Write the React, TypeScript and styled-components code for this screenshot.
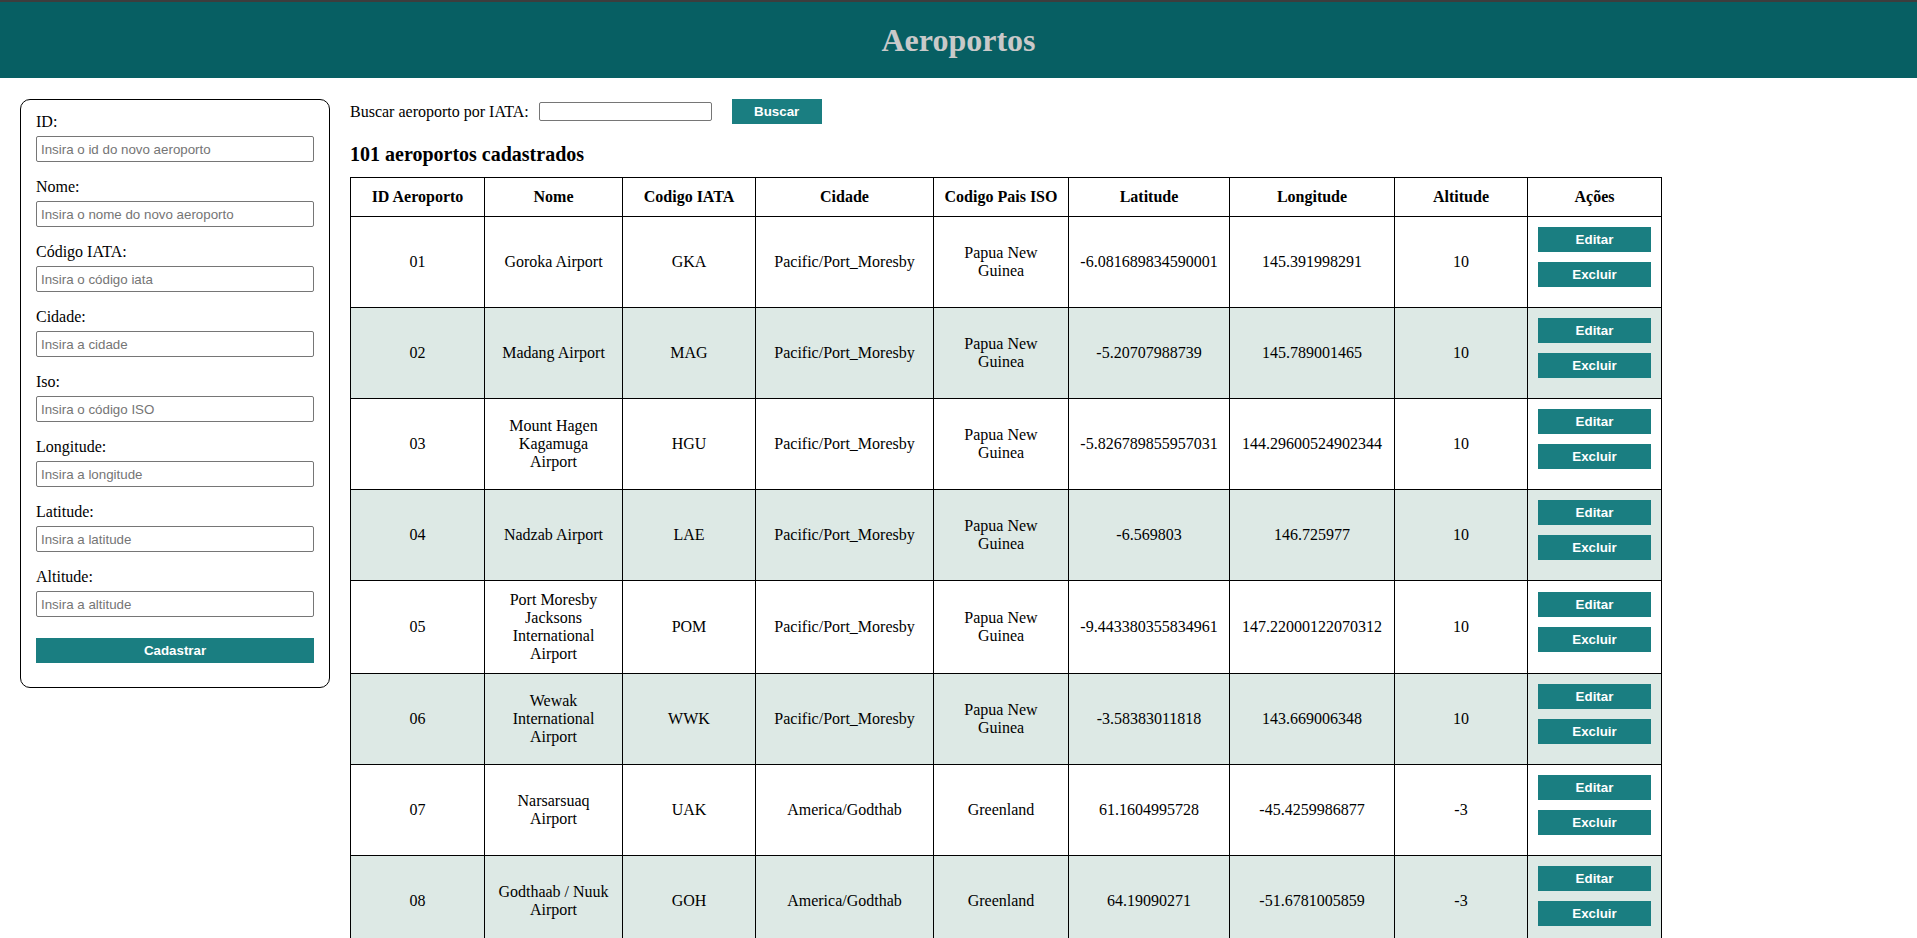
import React from "react";
import styled, { createGlobalStyle } from "styled-components";

const GlobalStyle = createGlobalStyle`
  html, body {
    margin: 0;
    padding: 0;
    background: #ffffff;
    font-family: "Liberation Serif", "Times New Roman", serif;
    color: #000000;
  }
  body::-webkit-scrollbar {
    width: 0;
    height: 0;
  }
`;

const Header = styled.header`
  height: 76px;
  border-top: 2px solid #3d3d3d;
  background: #075f63;
  display: flex;
  align-items: center;
  justify-content: center;
  h1 {
    margin: 0;
    font-size: 32px;
    font-weight: bold;
    color: #c9c9c9;
  }
`;

const Content = styled.div`
  display: flex;
  align-items: flex-start;
  gap: 20px;
  padding: 21px 20px 0;
`;

const FormPanel = styled.form`
  box-sizing: border-box;
  width: 310px;
  flex-shrink: 0;
  border: 1px solid #000000;
  border-radius: 10px;
  padding: 13px 15px 24px;
  display: flex;
  flex-direction: column;
`;

const Field = styled.div`
  display: flex;
  flex-direction: column;
  margin-bottom: 16px;
`;

const Label = styled.label`
  font-size: 16px;
  line-height: 18px;
  margin-bottom: 5px;
`;

const TextInput = styled.input<{ $width?: number }>`
  box-sizing: border-box;
  height: 26px;
  width: ${({ $width }) => ($width ? `${$width}px` : "100%")};
  border: 1px solid #767676;
  border-radius: 2px;
  padding: 0 4px;
  font-family: "Liberation Sans", Arial, sans-serif;
  font-size: 13.33px;
  &::placeholder {
    color: #757575;
  }
`;

const TealButton = styled.button<{ $width?: number }>`
  box-sizing: border-box;
  display: block;
  height: 25px;
  width: ${({ $width }) => ($width ? `${$width}px` : "100%")};
  border: none;
  border-radius: 0;
  background: #1a7e81;
  color: #ffffff;
  font-family: "Liberation Sans", Arial, sans-serif;
  font-size: 13.33px;
  font-weight: bold;
  padding: 0;
  cursor: pointer;
`;

const SubmitButton = styled(TealButton)`
  margin-top: 5px;
`;

const Main = styled.main`
  flex: 1;
  display: flex;
  flex-direction: column;
`;

const SearchRow = styled.div`
  display: flex;
  align-items: center;
  height: 25px;
  font-size: 16px;
  .search-input {
    height: 19px;
    margin-left: 10px;
    border-radius: 2px;
  }
  button {
    margin-left: 20px;
  }
`;

const Count = styled.h2`
  margin: 19px 0 11px;
  font-size: 20px;
  line-height: 23px;
  font-weight: bold;
`;

const Table = styled.table`
  border-collapse: collapse;
  table-layout: fixed;
  width: 1311px;
  font-size: 16px;
  th,
  td {
    border: 1px solid #000000;
    padding: 10px;
    text-align: center;
    vertical-align: middle;
    line-height: 18px;
  }
  th {
    font-weight: bold;
    white-space: nowrap;
  }
`;

const Row = styled.tr<{ $shaded: boolean }>`
  background: ${({ $shaded }) => ($shaded ? "#dde9e5" : "#ffffff")};
`;

const ActionCell = styled.td`
  button + button {
    margin-top: 10px;
  }
  button:last-child {
    margin-bottom: 10px;
  }
`;

type Airport = {
  id: string;
  nome: string;
  iata: string;
  cidade: string;
  pais: string;
  latitude: string;
  longitude: string;
  altitude: string;
};

const airports: Airport[] = [
  { id: "01", nome: "Goroka Airport", iata: "GKA", cidade: "Pacific/Port_Moresby", pais: "Papua New Guinea", latitude: "-6.081689834590001", longitude: "145.391998291", altitude: "10" },
  { id: "02", nome: "Madang Airport", iata: "MAG", cidade: "Pacific/Port_Moresby", pais: "Papua New Guinea", latitude: "-5.20707988739", longitude: "145.789001465", altitude: "10" },
  { id: "03", nome: "Mount Hagen Kagamuga Airport", iata: "HGU", cidade: "Pacific/Port_Moresby", pais: "Papua New Guinea", latitude: "-5.826789855957031", longitude: "144.29600524902344", altitude: "10" },
  { id: "04", nome: "Nadzab Airport", iata: "LAE", cidade: "Pacific/Port_Moresby", pais: "Papua New Guinea", latitude: "-6.569803", longitude: "146.725977", altitude: "10" },
  { id: "05", nome: "Port Moresby Jacksons International Airport", iata: "POM", cidade: "Pacific/Port_Moresby", pais: "Papua New Guinea", latitude: "-9.443380355834961", longitude: "147.22000122070312", altitude: "10" },
  { id: "06", nome: "Wewak International Airport", iata: "WWK", cidade: "Pacific/Port_Moresby", pais: "Papua New Guinea", latitude: "-3.58383011818", longitude: "143.669006348", altitude: "10" },
  { id: "07", nome: "Narsarsuaq Airport", iata: "UAK", cidade: "America/Godthab", pais: "Greenland", latitude: "61.1604995728", longitude: "-45.4259986877", altitude: "-3" },
  { id: "08", nome: "Godthaab / Nuuk Airport", iata: "GOH", cidade: "America/Godthab", pais: "Greenland", latitude: "64.19090271", longitude: "-51.6781005859", altitude: "-3" },
  { id: "09", nome: "Kangerlussuaq Airport", iata: "SFJ", cidade: "America/Godthab", pais: "Greenland", latitude: "67.0122218992", longitude: "-50.7116031647", altitude: "50" },
  { id: "10", nome: "Thule Air Base", iata: "THU", cidade: "America/Thule", pais: "Greenland", latitude: "76.5311965942", longitude: "-68.7032012939", altitude: "251" },
];

const fields = [
  { label: "ID:", placeholder: "Insira o id do novo aeroporto" },
  { label: "Nome:", placeholder: "Insira o nome do novo aeroporto" },
  { label: "Código IATA:", placeholder: "Insira o código iata" },
  { label: "Cidade:", placeholder: "Insira a cidade" },
  { label: "Iso:", placeholder: "Insira o código ISO" },
  { label: "Longitude:", placeholder: "Insira a longitude" },
  { label: "Latitude:", placeholder: "Insira a latitude" },
  { label: "Altitude:", placeholder: "Insira a altitude" },
];

const columns = [134, 138, 133, 178, 135, 161, 165, 133, 134];
const headers = [
  "ID Aeroporto",
  "Nome",
  "Codigo IATA",
  "Cidade",
  "Codigo Pais ISO",
  "Latitude",
  "Longitude",
  "Altitude",
  "Ações",
];

const App: React.FC = () => {
  return (
    <>
      <GlobalStyle />
      <Header>
        <h1>Aeroportos</h1>
      </Header>
      <Content>
        <FormPanel onSubmit={(e) => e.preventDefault()}>
          {fields.map((f) => (
            <Field key={f.label}>
              <Label>{f.label}</Label>
              <TextInput type="text" placeholder={f.placeholder} />
            </Field>
          ))}
          <SubmitButton type="submit">Cadastrar</SubmitButton>
        </FormPanel>
        <Main>
          <SearchRow>
            <span>Buscar aeroporto por IATA:</span>
            <TextInput className="search-input" type="text" $width={173} />
            <TealButton $width={90}>Buscar</TealButton>
          </SearchRow>
          <Count>101 aeroportos cadastrados</Count>
          <Table>
            <colgroup>
              {columns.map((w, i) => (
                <col key={i} style={{ width: w }} />
              ))}
            </colgroup>
            <thead>
              <tr>
                {headers.map((h) => (
                  <th key={h}>{h}</th>
                ))}
              </tr>
            </thead>
            <tbody>
              {airports.map((a, i) => (
                <Row key={a.id} $shaded={i % 2 === 1}>
                  <td>{a.id}</td>
                  <td>{a.nome}</td>
                  <td>{a.iata}</td>
                  <td>{a.cidade}</td>
                  <td>{a.pais}</td>
                  <td>{a.latitude}</td>
                  <td>{a.longitude}</td>
                  <td>{a.altitude}</td>
                  <ActionCell>
                    <TealButton>Editar</TealButton>
                    <TealButton>Excluir</TealButton>
                  </ActionCell>
                </Row>
              ))}
            </tbody>
          </Table>
        </Main>
      </Content>
    </>
  );
};

export default App;
